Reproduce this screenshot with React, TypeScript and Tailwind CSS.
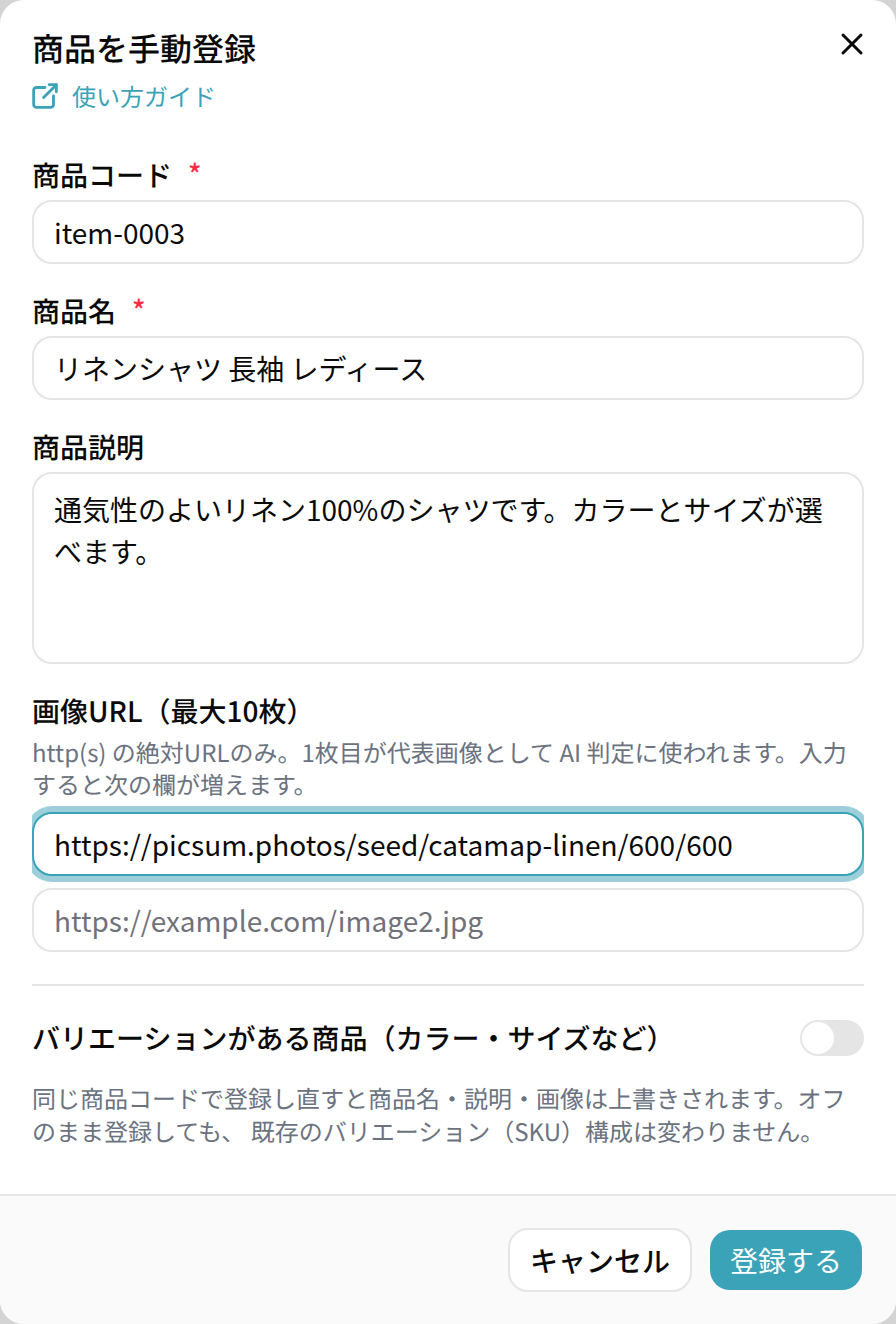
import React from 'react';
import { TbExternalLink, TbX } from 'react-icons/tb';

const inputBase =
  'block w-full h-16 rounded-[20px] border-2 bg-white px-5 text-[28px] text-[#0a0a0a] outline-none placeholder:text-[#71717a]';

const Label = ({ text, required }: { text: string; required?: boolean }) => (
  <div className="flex h-[40px] items-center text-[28px] font-medium leading-[40px] text-[#0a0a0a]">
    {text}
    {required && <span className="ml-4 -translate-y-px text-[#fa2d48]">*</span>}
  </div>
);

export default function App() {
  return (
    <div className="h-[1324px] w-[896px] overflow-hidden bg-[#d4d4d4] font-['Noto_Sans_CJK_JP','Noto_Sans',sans-serif] [text-rendering:geometricPrecision]">
      <div className="flex h-full flex-col overflow-hidden rounded-[24px] bg-white">
        <div className="relative flex-1 overflow-x-clip px-8">
          <button className="absolute right-[26px] top-[26px] text-[#0a0a0a]">
            <TbX size={36} />
          </button>

          <h2 className="pt-6 text-[32px] font-medium leading-[48px] text-[#0a0a0a]">商品を手動登録</h2>
          <a className="flex h-[48px] items-center gap-2.5 text-[24px] text-[#3ba3b8]">
            <TbExternalLink size={34} className="-ml-1" />
            使い方ガイド
          </a>

          <div className="mt-[35px]">
            <Label text="商品コード" required />
            <input readOnly value="item-0003" className={`${inputBase} mt-[5px] border-[#e5e5e5]`} />
          </div>

          <div className="mt-[27px]">
            <Label text="商品名" required />
            <input readOnly value="リネンシャツ 長袖 レディース" className={`${inputBase} mt-[5px] border-[#e5e5e5]`} />
          </div>

          <div className="mt-[27px]">
            <Label text="商品説明" />
            <textarea
              readOnly
              value="通気性のよいリネン100%のシャツです。カラーとサイズが選べます。"
              className="mt-[5px] block h-[192px] w-full resize-none rounded-[20px] border-2 border-[#e5e5e5] bg-white px-5 py-[14px] text-[28px] leading-[42px] text-[#0a0a0a] outline-none"
            />
          </div>

          <div className="mt-[27px]">
            <Label text="画像URL（最大10枚）" />
            <p className="mt-[5px] text-[24px] leading-[32px] text-[#6b7280]">
              http(s) の絶対URLのみ。1枚目が代表画像として AI 判定に使われます。入力すると次の欄が増えます。
            </p>
            <div className="overflow-x-clip">
              <input
                readOnly
                value="https://picsum.photos/seed/catamap-linen/600/600"
                className={`${inputBase} mt-3 border-[#3ba3b8] ring-[6px] ring-[#9ccfd9]`}
              />
              <input readOnly placeholder="https://example.com/image2.jpg" className={`${inputBase} mt-3 border-[#e5e5e5]`} />
            </div>
          </div>

          <div className="mt-8 h-[2px] bg-[#e5e5e5]" />

          <div className="mt-[34px] flex h-[36px] items-center justify-between">
            <span className="text-[28px] font-medium text-[#0a0a0a]">バリエーションがある商品（カラー・サイズなど）</span>
            <div className="flex h-9 w-16 items-center rounded-full bg-[#e5e5e5] p-[2px]">
              <div className="h-8 w-8 rounded-full bg-white" />
            </div>
          </div>

          <p className="mt-[25px] text-[24px] leading-[33px] text-[#6b7280]">
            同じ商品コードで登録し直すと商品名・説明・画像は上書きされます。オフのまま登録しても、 既存のバリエーション（SKU）構成は変わりません。
          </p>
        </div>

        <div className="flex h-[130px] items-center justify-end gap-[18px] border-t-2 border-[#e5e5e5] bg-[#fafafa] px-[34px]">
          <button className="h-16 w-[184px] rounded-[20px] border-2 border-[#e5e5e5] bg-white text-[28px] font-medium text-[#0a0a0a]">
            キャンセル
          </button>
          <button className="h-[60px] w-[152px] rounded-[20px] bg-[#3ba3b8] text-[28px] text-white">
            登録する
          </button>
        </div>
      </div>
    </div>
  );
}
